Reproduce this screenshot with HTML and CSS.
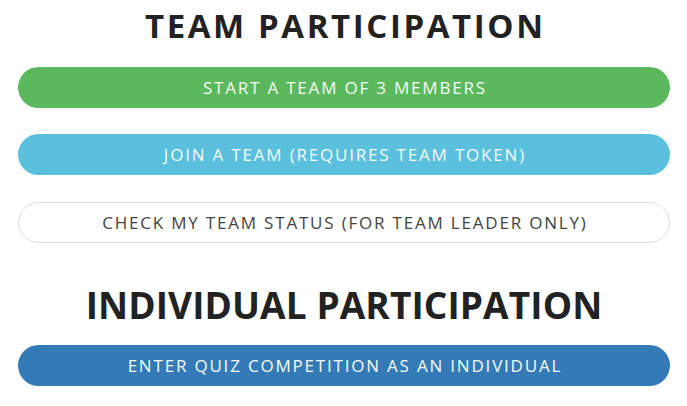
FILE: index.html
```html
<!DOCTYPE html>
<html>
<head>
<meta charset="utf-8">
<link rel="stylesheet" href="styles.css">
</head>
<body>
<main class="page">
  <h1 class="title title-team">TEAM PARTICIPATION</h1>
  <div class="btn-group">
    <a class="btn btn-green">START A TEAM OF 3 MEMBERS</a>
    <a class="btn btn-cyan">JOIN A TEAM (REQUIRES TEAM TOKEN)</a>
    <a class="btn btn-white">CHECK MY TEAM STATUS (FOR TEAM LEADER ONLY)</a>
  </div>
  <h1 class="title title-indiv">INDIVIDUAL PARTICIPATION</h1>
  <div class="btn-group">
    <a class="btn btn-blue">ENTER QUIZ COMPETITION AS AN INDIVIDUAL</a>
  </div>
</main>
</body>
</html>
```

FILE: styles.css
```css
html, body {
  margin: 0;
  padding: 0;
  background: #ffffff;
}
.page {
  padding: 0 17px 0 18px;
  display: flex;
  flex-direction: column;
}
.title {
  margin: 0;
  text-align: center;
  font-family: "Open Sans", "DejaVu Sans", sans-serif;
  font-weight: 700;
  color: #222222;
}
.title-team {
  font-size: 33px;
  line-height: 40px;
  letter-spacing: 2.6px;
  padding-left: 2.6px;
  margin-top: 6px;
  margin-bottom: 21px;
}
.title-indiv {
  font-size: 37px;
  line-height: 44px;
  letter-spacing: 0.1px;
  margin-top: 40px;
  margin-bottom: 18px;
}
.btn-group {
  display: flex;
  flex-direction: column;
  gap: 26px;
}
.btn {
  display: flex;
  align-items: center;
  justify-content: center;
  height: 41px;
  box-sizing: border-box;
  border-radius: 21px;
  padding-left: 1.8px;
  font-family: "Open Sans", "DejaVu Sans", sans-serif;
  font-size: 17px;
  letter-spacing: 1.8px;
  color: #f4fbf4;
  text-decoration: none;
}
.btn-green { background: #5cb85c; }
.btn-cyan { background: #5bc0de; }
.btn-white {
  margin-top: 1px;
  background: #ffffff;
  color: #444444;
  border: 1px solid #dddddd;
}
.btn-blue { background: #337ab7; }
```
